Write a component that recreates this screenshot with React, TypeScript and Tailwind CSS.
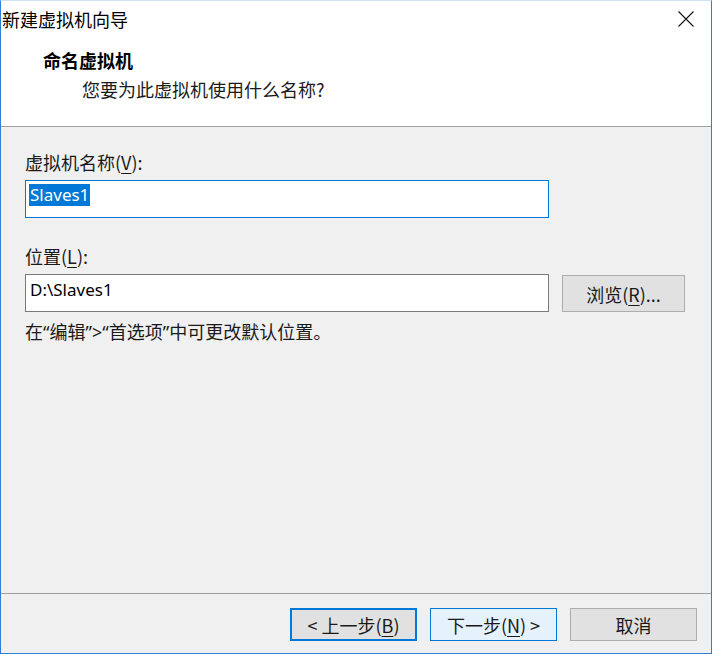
import React from "react";

const cjk = { fontFamily: '"Noto Sans CJK SC", "Noto Sans", sans-serif' };
const latin = { fontFamily: '"Noto Sans", "Noto Sans CJK SC", sans-serif' };

function U({ children }: { children: React.ReactNode }) {
  return <span className="underline underline-offset-[3px] decoration-1">{children}</span>;
}

function Q({ children }: { children: React.ReactNode }) {
  return <span style={latin}>{children}</span>;
}

export default function App() {
  return (
    <div
      className="w-[712px] h-[654px] flex flex-col bg-[#f0f0f0] border-x border-b border-t border-x-[#2f7fd5] border-b-[#2f7fd5] border-t-[#cfe3f7] text-black overflow-hidden"
      style={cjk}
    >
      {/* header */}
      <div className="bg-white border-b border-[#a0a0a0] h-[126px] flex flex-col shrink-0">
        <div className="h-[35px] flex items-center justify-between">
          <div className="pl-[1px] text-[18px] leading-[24px]">新建虚拟机向导</div>
          <div className="w-[46px] h-[35px] flex items-center justify-center mr-[2px]">
            <svg width="16" height="16" viewBox="0 0 16 16">
              <path d="M0.5 0.5 L15.5 15.5 M15.5 0.5 L0.5 15.5" stroke="#111" strokeWidth="1.1" fill="none" />
            </svg>
          </div>
        </div>
        <div className="pl-[42px] mt-[12px] text-[18px] leading-[24px] font-bold">命名虚拟机</div>
        <div className="pl-[81px] mt-[5px] text-[18px] leading-[24px] text-[#1a1a1a]">
          您要为此虚拟机使用什么名称?
        </div>
      </div>

      {/* body */}
      <div className="flex-1 flex flex-col px-[24px]">
        <div className="mt-[23px] text-[18px] leading-[24px] text-[#1a1a1a]">
          虚拟机名称(<U>V</U>):
        </div>
        <div className="mt-[6px] w-[524px] h-[38px] bg-white border border-[#0078d7] flex items-start pt-[3px] pl-[3px]">
          <span className="bg-[#0078d7] text-white text-[17px] leading-[22px] px-[1px]" style={latin}>
            Slaves1
          </span>
        </div>
        <div className="mt-[26px] text-[18px] leading-[24px] text-[#1a1a1a]">
          位置(<U>L</U>):
        </div>
        <div className="mt-[6px] flex items-start gap-[13px]">
          <div className="w-[524px] h-[38px] bg-white border border-[#7a7a7a] flex items-start pt-[4px] pl-[3px]">
            <span className="text-[17px] leading-[22px] px-[1px]" style={latin}>
              D:\Slaves1
            </span>
          </div>
          <button className="mt-[1px] w-[123px] h-[37px] bg-[#e1e1e1] border border-[#adadad] flex items-center justify-center text-[18px] leading-[24px] text-[#1a1a1a]">
            浏览(<U>R</U>)...
          </button>
        </div>
        <div className="mt-[7px] text-[18px] leading-[24px] text-[#1a1a1a]">
          在<Q>“</Q>编辑<Q>”&gt;“</Q>首选项<Q>”</Q>中可更改默认位置。
        </div>
      </div>

      {/* footer */}
      <div className="shrink-0 h-[60px] border-t border-[#a0a0a0] flex items-start justify-end gap-[13px] pt-[14px] pr-[14px]">
        <button className="w-[127px] h-[33px] bg-[#e1e1e1] border-2 border-[#0078d7] flex items-center justify-center text-[18px] leading-[24px] text-[#1a1a1a]">
          &lt; 上一步(<U>B</U>)
        </button>
        <button className="w-[127px] h-[33px] bg-[#e5f1fb] border border-[#0078d7] flex items-center justify-center text-[18px] leading-[24px] text-[#1a1a1a]">
          下一步(<U>N</U>) &gt;
        </button>
        <button className="w-[127px] h-[33px] bg-[#e1e1e1] border border-[#adadad] flex items-center justify-center text-[18px] leading-[24px] text-[#1a1a1a]">
          取消
        </button>
      </div>
    </div>
  );
}
